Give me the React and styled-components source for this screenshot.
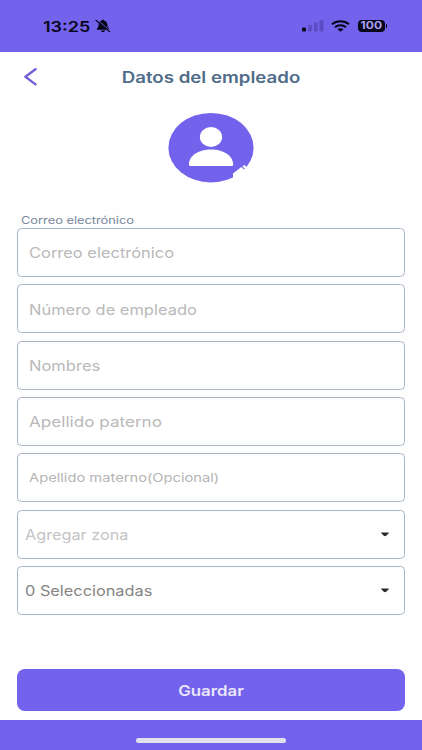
import React from 'react'
import styled, { createGlobalStyle } from 'styled-components'

const purple = '#7362EB'

const GlobalStyle = createGlobalStyle`
  * {
    box-sizing: border-box;
  }

  body {
    margin: 0;
    background-color: #fefefe;
    font-family: 'Inter', 'Liberation Sans', sans-serif;
  }
`

const Screen = styled.div`
  width: 422px;
  height: 750px;
  display: flex;
  flex-direction: column;
  overflow: hidden;
  background-color: #fefefe;
`

const StatusBar = styled.div`
  height: 52px;
  flex-shrink: 0;
  display: flex;
  justify-content: space-between;
  padding: 14px 35px 14px 43px;
  background-color: ${purple};
`

const StatusGroup = styled.div`
  display: flex;
  align-items: center;
  height: 24px;
`

/* wide lettering, $stretch is the horizontal factor */
const Text = styled.span`
  display: block;
  white-space: nowrap;
  line-height: 1.2;
  font-size: ${({ $size }) => $size}px;
  font-weight: ${({ $weight }) => $weight || 400};
  color: ${({ $color }) => $color};
  transform: scaleX(${({ $stretch }) => $stretch || 1.2});
  transform-origin: ${({ $origin }) => $origin || 'left'} center;
`

const Time = styled.div`
  width: 52px;
  padding-top: 2px;
`

const Icon = styled.svg`
  display: block;
  flex-shrink: 0;
  margin-left: ${({ $left }) => $left || 0}px;
`

const Battery = styled.div`
  width: 27px;
  height: 12px;
  margin-left: 8px;
  padding-top: 1px;
  display: flex;
  align-items: center;
  justify-content: center;
  border-radius: 4px;
  background-color: #08061a;
`

const BatteryTip = styled.div`
  width: 1.5px;
  height: 4px;
  margin-left: 1px;
  border-radius: 0 2px 2px 0;
  background-color: #08061a;
`

const Header = styled.header`
  height: 49px;
  flex-shrink: 0;
  display: grid;
  grid-template-columns: 60px 1fr 60px;
  align-items: center;
  background-color: #fff;
`

const BackButton = styled.button`
  height: 30px;
  padding: 0 0 0 23px;
  border: 0;
  background: none;
  cursor: pointer;
`

const Title = styled.h1`
  margin: 0;
  padding-top: 3px;
  text-align: center;
`

const AvatarWrapper = styled.div`
  height: 109px;
  flex-shrink: 0;
  display: flex;
  justify-content: center;
  padding-top: 11px;
`

const Form = styled.form`
  display: flex;
  flex-direction: column;
  padding: 0 17px;
`

const Label = styled.label`
  height: 18px;
  padding: 5px 0 0 4px;
`

const Fields = styled.div`
  display: flex;
  flex-direction: column;
  gap: 7.33px;
`

const Field = styled.div`
  height: 49px;
  display: flex;
  align-items: center;
  justify-content: space-between;
  padding: 1px 14.5px 0 ${({ $select }) => ($select ? 7 : 11)}px;
  border: 1px solid #a9b6ca;
  border-radius: 4.5px;
  background-color: #fff;
`

const SaveButton = styled.button`
  height: 42.5px;
  margin-top: 54px;
  padding: 0;
  border: 0;
  border-radius: 8px;
  background-color: ${purple};
  font-family: inherit;
  cursor: pointer;
`

const BottomBar = styled.div`
  height: 30px;
  flex-shrink: 0;
  margin-top: auto;
  display: flex;
  justify-content: center;
  padding-top: 18px;
  background-color: ${purple};
`

const HomeIndicator = styled.div`
  width: 150px;
  height: 5px;
  border-radius: 3px;
  background-color: #e3e0ee;
`

const fields = [
  { text: 'Correo electrónico', size: 14.5, color: '#b9b9b9', stretch: 1.135 },
  { text: 'Número de empleado', size: 14.5, color: '#b9b9b9', stretch: 1.135 },
  { text: 'Nombres', size: 14.5, color: '#b9b9b9', stretch: 1.14 },
  { text: 'Apellido paterno', size: 14.5, color: '#b9b9b9', stretch: 1.18 },
  { text: 'Apellido materno(Opcional)', size: 12, color: '#b4b4b4', stretch: 1.225 },
  { text: 'Agregar zona', size: 14.5, color: '#c4c4c6', stretch: 1.12, select: true },
  { text: '0 Seleccionadas', size: 14.5, color: '#858585', stretch: 1.125, select: true },
]

function BellOff() {
  return (
    <Icon width="16" height="14" viewBox="0 0 16 14">
      <path
        d="M8 .8c.8 0 1.3.4 1.4 1 2 .6 2.9 2 3 4 .1 2 .6 2.9 1.7 3.8.4.5.1 1.100-.5 1.100H2.400c-.6 0-.9-.6-.5-1.100C3 8.700 3.500 7.800 3.600 5.800c.1-2 1-3.400 3-4 .1-.6.600-1 1.400-1z"
        fill="#08061a"
      />
      <path d="M5.900 11.500h4.200c-.2 1-1 1.500-2.100 1.500s-1.900-.5-2.100-1.500z" fill="#08061a" />
      <path d="M1.800.6l13.400 11.300" stroke={purple} strokeWidth="1" />
      <path d="M1 1.200l13.700 11.500" stroke="#08061a" strokeWidth="1.200" strokeLinecap="round" />
    </Icon>
  )
}

function Signal() {
  return (
    <Icon width="22" height="12" viewBox="0 0 22 12">
      <rect x="0" y="7.500" width="4" height="4" rx="1" fill="#08061a" />
      <rect x="6" y="5" width="4" height="6.500" rx="1" fill="#5c4dc4" />
      <rect x="11.800" y="2.500" width="4" height="9" rx="1" fill="#5c4dc4" />
      <rect x="17.500" y="0.300" width="4" height="11.200" rx="1" fill="#5c4dc4" />
    </Icon>
  )
}

function Wifi() {
  return (
    <Icon $left={7} width="19" height="12" viewBox="0 0 19 12">
      <g fill="none" stroke="#08061a" strokeWidth="2">
        <path d="M1 4.300C5.800.2 13.200.2 18 4.300" />
        <path d="M4 7.200c3.200-2.700 7.800-2.700 11 0" />
      </g>
      <path d="M6.500 9.300c1.800-1.300 4.200-1.300 6 0l-3 2.400z" fill="#08061a" />
    </Icon>
  )
}

function Avatar() {
  return (
    <Icon width="86" height="71" viewBox="0 0 86 71">
      <ellipse cx="43" cy="35.700" rx="42.600" ry="34.800" fill={purple} />
      <ellipse cx="43" cy="25" rx="11.100" ry="10" fill="#fff" />
      <path d="M21 52.500C21 43.500 31 37.600 43 37.600s22.200 5.900 22.200 14.900c0 1-.6 1.500-1.700 1.500h-41c-1 0-1.500-.5-1.500-1.500z" fill="#fff" />
      {/* pencil */}
      <path d="M65 61.500l8.300-6.500 5 4.500-8.300 8h-5z" fill="#fff" />
      <path d="M74.300 54.300l2.100-1.300 3.600 3-1.700 2z" fill="#fff" />
    </Icon>
  )
}

function Caret() {
  return (
    <Icon width="10" height="5" viewBox="0 0 10 5">
      <path d="M1.600.6h6.800c.5 0 .6.400.3.700L6.200 3.800c-.7.600-1.700.6-2.400 0L1.300 1.300C1 1 1.100.6 1.600.6z" fill="#2b2b2b" />
    </Icon>
  )
}

function App() {
  return (
    <>
      <GlobalStyle />
      <Screen>
        <StatusBar>
          <StatusGroup>
            <Time>
              <Text $size={15} $weight={600} $color="#08061a" $stretch={1.2}>13:25</Text>
            </Time>
            <BellOff />
          </StatusGroup>
          <StatusGroup>
            <Signal />
            <Wifi />
            <Battery>
              <Text $size={10.5} $weight={700} $color="#a99ff5" $stretch={1.15} $origin="center">100</Text>
            </Battery>
            <BatteryTip />
          </StatusGroup>
        </StatusBar>
        <Header>
          <BackButton type="button" aria-label="Volver">
            <Icon width="14" height="18" viewBox="0 0 14 18">
              <path d="M12.500 1.200L2.400 8.800l10.100 7.600" fill="none" stroke="#7560d8" strokeWidth="2.400" strokeLinecap="round" strokeLinejoin="round" />
            </Icon>
          </BackButton>
          <Title>
            <Text $size={15.5} $weight={600} $color="#4f6c88" $stretch={1.205} $origin="center">Datos del empleado</Text>
          </Title>
        </Header>
        <AvatarWrapper>
          <Avatar />
        </AvatarWrapper>
        <Form>
          <Label>
            <Text $size={10.5} $color="#76869b" $stretch={1.22}>Correo electrónico</Text>
          </Label>
          <Fields>
            {fields.map((field) => (
              <Field key={field.text} $select={field.select}>
                <Text $size={field.size} $color={field.color} $stretch={field.stretch}>{field.text}</Text>
                {field.select && <Caret />}
              </Field>
            ))}
          </Fields>
          <SaveButton type="button">
            <Text $size={14.5} $weight={600} $color="#e9e6fc" $stretch={1.16} $origin="center">Guardar</Text>
          </SaveButton>
        </Form>
        <BottomBar>
          <HomeIndicator />
        </BottomBar>
      </Screen>
    </>
  )
}

export default App
